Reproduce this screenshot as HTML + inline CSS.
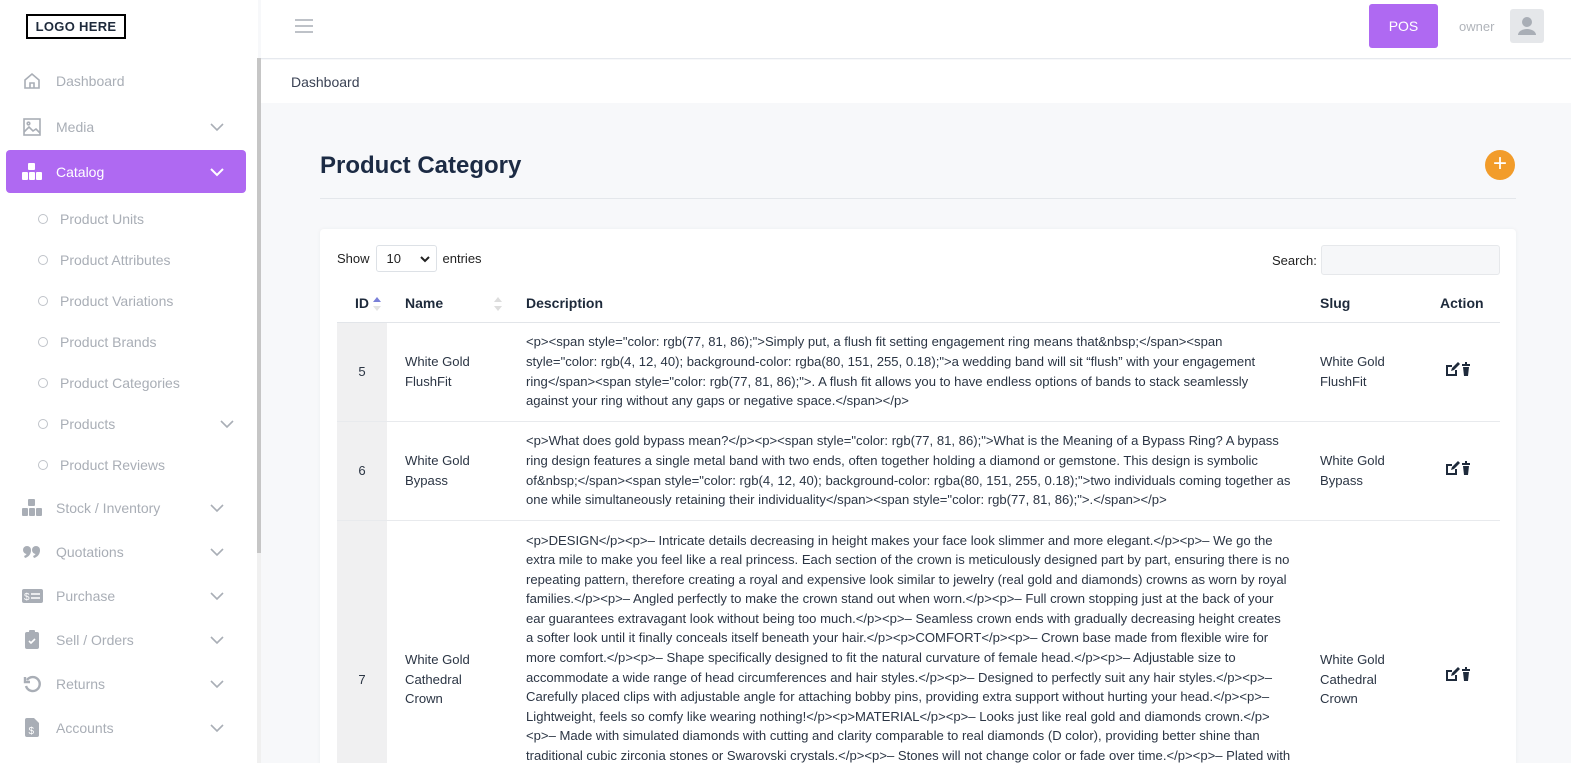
<!DOCTYPE html>
<html style="width:1571px;height:763px;overflow:hidden"><head><meta charset="utf-8"><style>
*{box-sizing:border-box;margin:0;padding:0}
body{width:1571px;height:763px;overflow:hidden;font-family:"Liberation Sans",Arial,sans-serif;background:#f7f8fa;position:relative;color:#1e2a3b}
.sb{position:absolute;left:0;top:0;width:258px;height:763px;background:#fff}
.scroll{position:absolute;left:257px;top:58px;width:4px;height:495px;background:#c6c6c6}
.scrolltrack{position:absolute;left:257px;top:58px;width:4px;height:705px;background:#f0f0f0}
.logo{position:absolute;left:26px;top:14px;width:100px;height:25px;border:2px solid #000;font-weight:bold;font-size:13px;text-align:center;line-height:21px;letter-spacing:.3px}
.mi{position:absolute;left:6px;width:240px;height:43px;display:flex;align-items:center;color:#a9aeb6;font-size:14px}
.mi .ic{width:50px;display:flex;justify-content:center;padding-left:2px}
.mi .tx{flex:1}
.mi .ch{width:36px;}
.mi.act{background:#af69f2;color:#fff;border-radius:4px}
.sub{position:absolute;left:38px;font-size:14px;color:#a9aeb6;display:flex;align-items:center}
.sub i{display:inline-block;width:10px;height:10px;border:1px solid #bfc3c9;border-radius:50%;margin-right:12px}
.hdr{position:absolute;left:261px;top:0;right:0;height:59px;background:#fff;border-bottom:1px solid #e6e9ee}
.bc{position:absolute;left:261px;top:60px;right:0;height:43px;background:#fff;font-size:14px;color:#3a4254;padding:14px 0 0 30px}
.pos{position:absolute;left:1369px;top:4px;width:69px;height:44px;background:#af69f2;color:#fff;border-radius:3px;font-size:14px;text-align:center;line-height:44px}
.own{position:absolute;left:1459px;top:19px;font-size:13px;color:#b0b4ba}
.av{position:absolute;left:1510px;top:9px;width:34px;height:34px;background:#e5e7ea;border-radius:3px}
h1{position:absolute;left:320px;top:152px;font-size:24px;color:#1c2b44;font-weight:bold}
.hr{position:absolute;left:320px;top:198px;width:1196px;height:1px;background:#e4e7eb}
.plus{position:absolute;left:1485px;top:150px;width:30px;height:30px;border-radius:50%;background:#f29c2a;color:#fff;font-size:24px;line-height:28px;text-align:center}
.card{position:absolute;left:320px;top:229px;width:1196px;height:540px;background:#fff;border-radius:4px;box-shadow:0 0 4px rgba(0,0,0,.05);overflow:hidden}
.show{position:absolute;left:17px;top:16px;font-size:13px;color:#222;display:flex;align-items:center}
.sel{width:61px;height:27px;border:1px solid #dde1e6;border-radius:3px;margin:0 6px;padding:5px 0 0 10px;position:relative}
.srch{position:absolute;left:952px;top:24px;font-size:13px;color:#222}
.sin{position:absolute;left:1001px;top:16px;width:179px;height:30px;background:#f6f7f9;border:1px solid #e6e8eb;border-radius:3px}
table{position:absolute;left:17px;top:56px;width:1163px;border-collapse:collapse;font-size:13.1px;color:#2b3544}
th{text-align:left;font-weight:bold;height:37px;font-size:14px;color:#1e2a3b;border-bottom:1px solid #e2e5e9;position:relative}
td{border-bottom:1px solid #e8eaed;line-height:19.6px;vertical-align:middle}
td.id{background:#f0f0f1;text-align:center;width:50px}
td.d{padding:8px 14px 8px 16px}
</style></head><body>
<div class="sb">
<div class="logo">LOGO HERE</div>
<div class="mi" style="top:59px"><span class="ic"><svg width="20" height="20" viewBox="0 0 20 20" fill="none" stroke="#a9aeb6" stroke-width="1.6"><path d="M3 9L10 3l7 6v8H3z"/><path d="M8 17v-5h4v5"/></svg></span><span class="tx">Dashboard</span></div>
<div class="mi" style="top:105px"><span class="ic"><svg width="18" height="18" viewBox="0 0 18 18" fill="none" stroke="#a9aeb6" stroke-width="1.6"><rect x="1" y="1" width="16" height="16"/><circle cx="5.5" cy="5.5" r="1.3"/><path d="M1 14l5-5 4 4 3-2 4 4"/></svg></span><span class="tx">Media</span><span class="ch"><svg width="14" height="9"><path d="M1 1l6 6 6-6" fill="none" stroke="#a9aeb6" stroke-width="1.6"/></svg></span></div>
<div class="mi act" style="top:150px"><span class="ic"><svg width="22" height="18" viewBox="0 0 22 18" fill="#fff"><rect x="7" y="0" width="7" height="7" rx="1"/><rect x="1" y="9" width="6" height="8" rx="1"/><rect x="8" y="9" width="6" height="8" rx="1"/><rect x="15" y="9" width="6" height="8" rx="1"/></svg></span><span class="tx">Catalog</span><span class="ch"><svg width="14" height="9"><path d="M1 1l6 6 6-6" fill="none" stroke="#fff" stroke-width="2"/></svg></span></div>
<div class="sub" style="top:211px"><i></i>Product Units</div>
<div class="sub" style="top:252px"><i></i>Product Attributes</div>
<div class="sub" style="top:293px"><i></i>Product Variations</div>
<div class="sub" style="top:334px"><i></i>Product Brands</div>
<div class="sub" style="top:375px"><i></i>Product Categories</div>
<div class="sub" style="top:416px;width:196px"><i></i>Products<svg style="margin-left:auto" width="14" height="9"><path d="M1 1l6 6 6-6" fill="none" stroke="#a9aeb6" stroke-width="1.6"/></svg></div>
<div class="sub" style="top:457px"><i></i>Product Reviews</div>
<div class="mi" style="top:486px"><span class="ic"><svg width="22" height="18" viewBox="0 0 22 18" fill="#a9aeb6"><rect x="7" y="0" width="7" height="7" rx="1"/><rect x="1" y="9" width="6" height="8" rx="1"/><rect x="8" y="9" width="6" height="8" rx="1"/><rect x="15" y="9" width="6" height="8" rx="1"/></svg></span><span class="tx">Stock / Inventory</span><span class="ch"><svg width="14" height="9"><path d="M1 1l6 6 6-6" fill="none" stroke="#a9aeb6" stroke-width="1.6"/></svg></span></div>
<div class="mi" style="top:530px"><span class="ic"><svg width="18" height="12" viewBox="0 0 18 12" fill="#a9aeb6"><circle cx="4" cy="4" r="4"/><path d="M8 4q0 6-6 8l-1-2q3-1 3-4z"/><circle cx="13" cy="4" r="4"/><path d="M17 4q0 6-6 8l-1-2q3-1 3-4z"/></svg></span><span class="tx">Quotations</span><span class="ch"><svg width="14" height="9"><path d="M1 1l6 6 6-6" fill="none" stroke="#a9aeb6" stroke-width="1.6"/></svg></span></div>
<div class="mi" style="top:574px"><span class="ic"><svg width="21" height="14"><rect width="21" height="14" rx="2" fill="#a9aeb6"/><text x="2" y="11" font-size="10" fill="#fff" font-family="Liberation Sans">$</text><path d="M9 5h9M9 9h9" stroke="#fff" stroke-width="1.6"/></svg></span><span class="tx">Purchase</span><span class="ch"><svg width="14" height="9"><path d="M1 1l6 6 6-6" fill="none" stroke="#a9aeb6" stroke-width="1.6"/></svg></span></div>
<div class="mi" style="top:618px"><span class="ic"><svg width="14" height="19"><rect y="2" width="14" height="17" rx="2" fill="#a9aeb6"/><rect x="4" y="0" width="6" height="4" rx="1" fill="#a9aeb6"/><path d="M4 11l2 2 4-4" stroke="#fff" stroke-width="1.6" fill="none"/></svg></span><span class="tx">Sell / Orders</span><span class="ch"><svg width="14" height="9"><path d="M1 1l6 6 6-6" fill="none" stroke="#a9aeb6" stroke-width="1.6"/></svg></span></div>
<div class="mi" style="top:662px"><span class="ic"><svg width="18" height="18" viewBox="0 0 18 18" fill="none" stroke="#a9aeb6" stroke-width="2.4"><path d="M4 5a7 7 0 1 1-1 6"/><path d="M2 2v5h5" /></svg></span><span class="tx">Returns</span><span class="ch"><svg width="14" height="9"><path d="M1 1l6 6 6-6" fill="none" stroke="#a9aeb6" stroke-width="1.6"/></svg></span></div>
<div class="mi" style="top:706px"><span class="ic"><svg width="14" height="19"><path d="M0 2a2 2 0 0 1 2-2h7l5 5v12a2 2 0 0 1-2 2H2a2 2 0 0 1-2-2z" fill="#a9aeb6"/><text x="3.5" y="16" font-size="10" fill="#fff" font-family="Liberation Sans">$</text></svg></span><span class="tx">Accounts</span><span class="ch"><svg width="14" height="9"><path d="M1 1l6 6 6-6" fill="none" stroke="#a9aeb6" stroke-width="1.6"/></svg></span></div>
</div>
<div class="scrolltrack"></div><div class="scroll"></div>
<div class="hdr"><svg style="position:absolute;left:34px;top:18px" width="18" height="16"><path d="M0 2h18M0 8h18M0 14h18" stroke="#a9aeb6" stroke-width="1.5"/></svg></div>
<div class="pos">POS</div><div class="own">owner</div>
<div class="av"><svg width="34" height="34"><circle cx="17" cy="13" r="5" fill="#a9aeb6"/><path d="M8 26a9 6 0 0 1 18 0z" fill="#a9aeb6"/></svg></div>
<div class="bc">Dashboard</div>
<h1>Product Category</h1>
<div class="plus">+</div>
<div class="hr"></div>
<div class="card">
<div class="show">Show<div class="sel">10<svg style="position:absolute;right:6px;top:10px" width="10" height="7"><path d="M1 1l4 4 4-4" stroke="#222" stroke-width="2" fill="none"/></svg></div>entries</div>
<div class="srch">Search:</div><div class="sin"></div>
<table>
<tr><th style="width:50px;padding-left:18px">ID<svg style="position:absolute;left:36px;top:12px" width="8" height="14"><path d="M0 5l4-5 4 5z" fill="#7a80d8"/><path d="M0 9l4 5 4-5z" fill="#e3e3e3"/></svg></th><th style="width:123px;padding-left:18px">Name<svg style="position:absolute;right:8px;top:12px" width="8" height="14"><path d="M0 5l4-5 4 5zM0 9l4 5 4-5z" fill="#ddd"/></svg></th><th style="width:795px;padding-left:16px">Description</th><th style="width:120px;padding-left:15px">Slug</th><th style="padding-left:15px">Action</th></tr>
<tr style="height:99px"><td class="id">5</td><td style="padding-left:18px">White Gold<br>FlushFit</td><td class="d">&lt;p&gt;&lt;span style="color: rgb(77, 81, 86);"&gt;Simply put, a flush fit setting engagement ring means that&amp;nbsp;&lt;/span&gt;&lt;span style="color: rgb(4, 12, 40); background-color: rgba(80, 151, 255, 0.18);"&gt;a wedding band will sit “flush” with your engagement ring&lt;/span&gt;&lt;span style="color: rgb(77, 81, 86);"&gt;. A flush fit allows you to have endless options of bands to stack seamlessly against your ring without any gaps or negative space.&lt;/span&gt;&lt;/p&gt;</td><td style="padding-left:15px">White Gold<br>FlushFit</td><td style="padding-left:20px"><svg width="26" height="14" viewBox="0 0 26 14" fill="#1e2a3b"><path d="M1 3h6v2H3v7h7V8h2v6H1z"/><path d="M6 9l1-3 6-6 2 2-6 6z"/><path d="M17 2h8v2h-8zM20 0h2v2h-2zM18 5h6l-1 9h-4z"/></svg></td></tr>
<tr style="height:99px"><td class="id">6</td><td style="padding-left:18px">White Gold<br>Bypass</td><td class="d">&lt;p&gt;What does gold bypass mean?&lt;/p&gt;&lt;p&gt;&lt;span style="color: rgb(77, 81, 86);"&gt;What is the Meaning of a Bypass Ring? A bypass ring design features a single metal band with two ends, often together holding a diamond or gemstone. This design is symbolic of&amp;nbsp;&lt;/span&gt;&lt;span style="color: rgb(4, 12, 40); background-color: rgba(80, 151, 255, 0.18);"&gt;two individuals coming together as one while simultaneously retaining their individuality&lt;/span&gt;&lt;span style="color: rgb(77, 81, 86);"&gt;.&lt;/span&gt;&lt;/p&gt;</td><td style="padding-left:15px">White Gold<br>Bypass</td><td style="padding-left:20px"><svg width="26" height="14" viewBox="0 0 26 14" fill="#1e2a3b"><path d="M1 3h6v2H3v7h7V8h2v6H1z"/><path d="M6 9l1-3 6-6 2 2-6 6z"/><path d="M17 2h8v2h-8zM20 0h2v2h-2zM18 5h6l-1 9h-4z"/></svg></td></tr>
<tr><td class="id" style="padding-top:6px">7</td><td style="padding-left:18px;padding-top:6px">White Gold<br>Cathedral<br>Crown</td><td class="d" style="padding-top:10px">&lt;p&gt;DESIGN&lt;/p&gt;&lt;p&gt;– Intricate details decreasing in height makes your face look slimmer and more elegant.&lt;/p&gt;&lt;p&gt;– We go the extra mile to make you feel like a real princess. Each section of the crown is meticulously designed part by part, ensuring there is no repeating pattern, therefore creating a royal and expensive look similar to jewelry (real gold and diamonds) crowns as worn by royal families.&lt;/p&gt;&lt;p&gt;– Angled perfectly to make the crown stand out when worn.&lt;/p&gt;&lt;p&gt;– Full crown stopping just at the back of your ear guarantees extravagant look without being too much.&lt;/p&gt;&lt;p&gt;– Seamless crown ends with gradually decreasing height creates a softer look until it finally conceals itself beneath your hair.&lt;/p&gt;&lt;p&gt;COMFORT&lt;/p&gt;&lt;p&gt;– Crown base made from flexible wire for more comfort.&lt;/p&gt;&lt;p&gt;– Shape specifically designed to fit the natural curvature of female head.&lt;/p&gt;&lt;p&gt;– Adjustable size to accommodate a wide range of head circumferences and hair styles.&lt;/p&gt;&lt;p&gt;– Designed to perfectly suit any hair styles.&lt;/p&gt;&lt;p&gt;– Carefully placed clips with adjustable angle for attaching bobby pins, providing extra support without hurting your head.&lt;/p&gt;&lt;p&gt;– Lightweight, feels so comfy like wearing nothing!&lt;/p&gt;&lt;p&gt;MATERIAL&lt;/p&gt;&lt;p&gt;– Looks just like real gold and diamonds crown.&lt;/p&gt;&lt;p&gt;– Made with simulated diamonds with cutting and clarity comparable to real diamonds (D color), providing better shine than traditional cubic zirconia stones or Swarovski crystals.&lt;/p&gt;&lt;p&gt;– Stones will not change color or fade over time.&lt;/p&gt;&lt;p&gt;– Plated with real white gold for a long lasting shine that resists tarnish and keeps its brilliant finish even after many wears.&lt;/p&gt;&lt;p&gt;– Hypoallergenic and nickel free, safe for sensitive skin.&lt;/p&gt;&lt;p&gt;PACKAGE&lt;/p&gt;&lt;p&gt;– Comes in an elegant gift box, ready to be presented as a present for weddings, proms, birthdays and other special occasions.&lt;/p&gt;&lt;p&gt;– Free polishing cloth included.&lt;/p&gt;</td><td style="padding-left:15px;padding-top:6px">White Gold<br>Cathedral<br>Crown</td><td style="padding-left:20px"><svg width="26" height="14" viewBox="0 0 26 14" fill="#1e2a3b"><path d="M1 3h6v2H3v7h7V8h2v6H1z"/><path d="M6 9l1-3 6-6 2 2-6 6z"/><path d="M17 2h8v2h-8zM20 0h2v2h-2zM18 5h6l-1 9h-4z"/></svg></td></tr>
</table>
</div>
</body></html>
